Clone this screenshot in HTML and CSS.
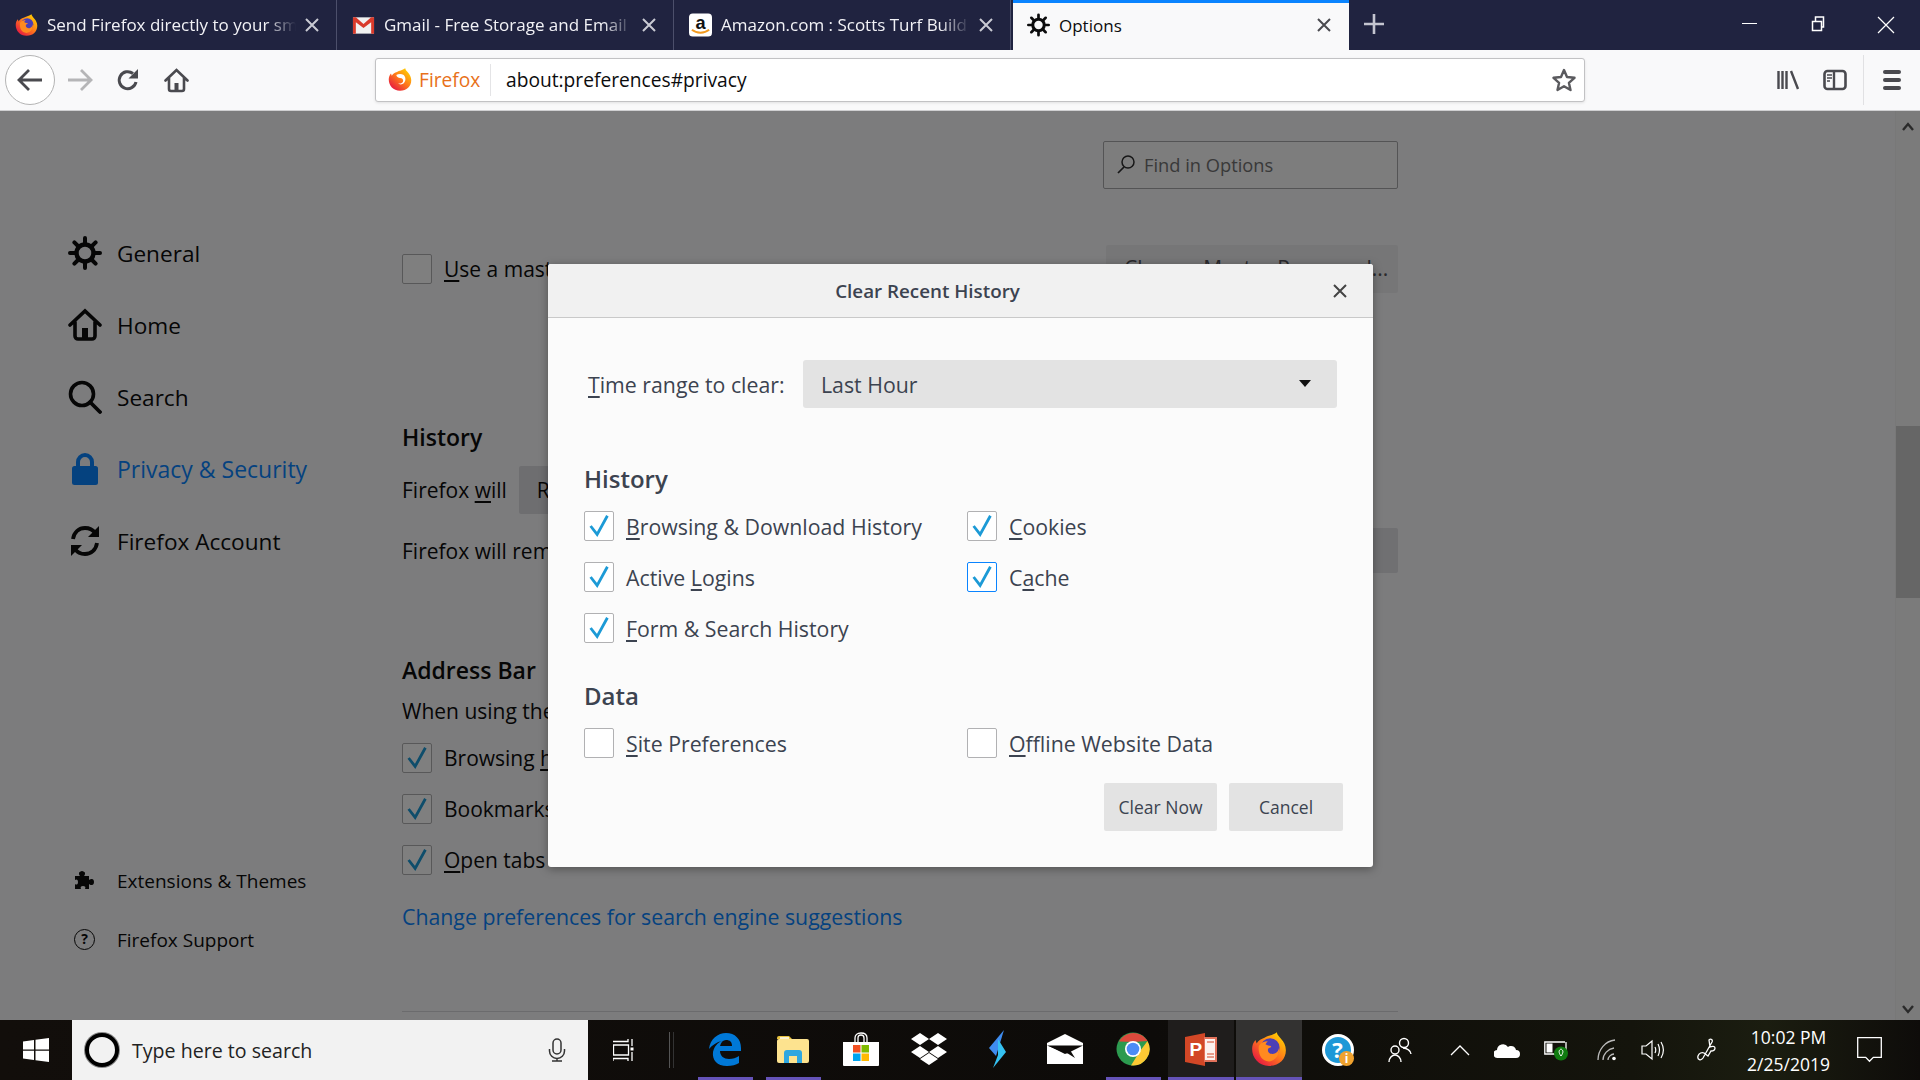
FILE: index.html
```html
<!DOCTYPE html>
<html lang="en">

<head>
    <meta charset="UTF-8">
    <title>Options</title>
    <link rel="stylesheet" href="styles.css">
</head>

<body>
    <svg class="defs" width="0" height="0">
        <defs>
            <linearGradient id="ffBody" x1="0.9" y1="0.1" x2="0.2" y2="0.9">
                <stop offset="0" stop-color="#ffd000" />
                <stop offset="0.5" stop-color="#ff7a1a" />
                <stop offset="1" stop-color="#e8203f" />
            </linearGradient>
            <symbol id="firefox" viewBox="0 0 32 32">
                <path d="M23 1c0 4 8 7 8 16 0 8-6 14-15 14C7 31 1 24 1 16c0-3 1-6 3-8l1 3c2-3 4-4 7-5 3-2 7-2 11-5z" fill="url(#ffBody)" />
                <circle cx="17" cy="15" r="8.5" fill="#4b3fb5" />
                <path d="M7 13c2-3 5-4 8-4-1 1-2 2-2 3 2 1 5 1 5 2-1 1-3 1-3 3 0 3 4 4 6 3 3-1 4-4 4-6 1 6-3 13-9 13-7 0-10-7-9-14z" fill="#ff8a1f" />
            </symbol>
            <symbol id="firefoxFlat" viewBox="0 0 32 32">
                <path d="M23 1c0 4 8 7 8 16 0 8-6 14-15 14C7 31 1 24 1 16c0-3 1-6 3-8l1 3c2-3 4-4 7-5 3-2 7-2 11-5z" fill="url(#ffBody)" />
                <path d="M11 10c3-2 7-2 10 0 3 3 3 8 0 11-2 2-6 2-8 0 3 1 6 0 7-2 1-3-1-5-4-5-2 0-4-1-5-4z" fill="#fff" />
            </symbol>
            <symbol id="gear" viewBox="0 0 34 34">
                <g fill="none" stroke="#0c0c0d">
                    <circle cx="17" cy="17" r="8.5" stroke-width="4.5" />
                    <path d="M17 2v5M17 27v5M2 17h5M27 17h5M6.4 6.4l3.6 3.6M24 24l3.6 3.6M27.6 6.4L24 10M10 24l-3.6 3.6" stroke-width="4" stroke-linecap="round" />
                </g>
            </symbol>
            <symbol id="tick" viewBox="0 0 30 30">
                <path d="M6 15l7 9L24 4" fill="none" stroke="#1c9ad6" stroke-width="3" />
            </symbol>
            <symbol id="cross" viewBox="0 0 16 16">
                <path d="M2 2l12 12M14 2L2 14" fill="none" stroke="currentColor" stroke-width="2" />
            </symbol>
        </defs>
    </svg>

    <div class="tabbar">
        <div class="tab">
            <svg class="tab-icon"><use href="#firefox" /></svg>
            <span class="tab-title fade">Send Firefox directly to your sm</span>
            <svg class="tab-close"><use href="#cross" /></svg>
        </div>
        <div class="tab">
            <svg class="tab-icon" viewBox="0 0 24 24">
                <rect x="1" y="4" width="22" height="17" fill="#f1f1f1" />
                <path d="M1 4h3l8 7 8-7h3v17h-3V9l-8 6-8-6v12H1z" fill="#d93a2b" />
            </svg>
            <span class="tab-title fade">Gmail - Free Storage and Email</span>
            <svg class="tab-close"><use href="#cross" /></svg>
        </div>
        <div class="tab">
            <svg class="tab-icon" viewBox="0 0 24 24">
                <rect width="24" height="24" rx="4" fill="#fff" />
                <text x="12" y="16" class="amazon-a">a</text>
                <path d="M3 17c5 4 13 4 18 0" fill="none" stroke="#f29a1f" stroke-width="2" />
            </svg>
            <span class="tab-title fade">Amazon.com : Scotts Turf Build</span>
            <svg class="tab-close"><use href="#cross" /></svg>
        </div>
        <div class="tab tab-active">
            <svg class="tab-icon"><use href="#gear" /></svg>
            <span class="tab-title">Options</span>
            <svg class="tab-close"><use href="#cross" /></svg>
        </div>
        <svg class="new-tab" viewBox="0 0 20 20">
            <path d="M10 0v20M0 10h20" stroke="#c4c5d0" stroke-width="2.6" />
        </svg>
        <div class="win-controls">
            <svg viewBox="0 0 68 50"><path d="M26 23.5h15" stroke="#fff" /></svg>
            <svg viewBox="0 0 68 50"><path d="M28.5 21.5h9v9h-9zM31.5 21v-4h8v10h-2" fill="none" stroke="#fff" stroke-width="1.5" /></svg>
            <svg viewBox="0 0 68 50"><path d="M26 17l16 16M42 17L26 33" fill="none" stroke="#fff" stroke-width="1.2" /></svg>
        </div>
    </div>

    <div class="toolbar">
        <div class="back-btn">
            <svg width="26" height="24" viewBox="0 0 26 24">
                <path d="M25 12H3M12 2L2 12l10 10" fill="none" stroke="#4a4a4f" stroke-width="2.8" />
            </svg>
        </div>
        <div class="tool-btn">
            <svg width="26" height="24" viewBox="0 0 26 24">
                <path d="M1 12h22M14 2l10 10-10 10" fill="none" stroke="#b5b5b7" stroke-width="2.8" />
            </svg>
        </div>
        <div class="tool-btn">
            <svg width="24" height="24" viewBox="0 0 24 24">
                <path d="M20 14a8.5 8.5 0 1 1-3-8.5" fill="none" stroke="#4a4a4f" stroke-width="3" />
                <path d="M22 1v9.5h-9.5z" fill="#4a4a4f" />
            </svg>
        </div>
        <div class="tool-btn">
            <svg width="25" height="25" viewBox="0 0 25 25">
                <path d="M1.5 12.5l11-10.5 11 10.5M5 10v11a2 2 0 0 0 2 2h11a2 2 0 0 0 2-2V10" fill="none" stroke="#4a4a4f" stroke-width="2.6" stroke-linecap="round" />
                <rect x="10.5" y="15" width="4" height="8" fill="#4a4a4f" />
            </svg>
        </div>
        <div class="urlbar">
            <svg class="url-icon"><use href="#firefoxFlat" /></svg>
            <span class="url-brand">Firefox</span>
            <span class="url-text">about:preferences#privacy</span>
            <svg class="url-star" width="24" height="24" viewBox="0 0 24 24">
                <path d="M12 2l3 7 7.5.8-5.6 5 1.6 7.2L12 18.2 5.500 22l1.600-7.200-5.600-5L9 9z" fill="none" stroke="#5a5a5e" stroke-width="2.4" stroke-linejoin="round" />
            </svg>
        </div>
        <div class="tool-right">
            <div class="tool-btn-r">
                <svg width="24" height="24" viewBox="0 0 24 24">
                    <path d="M2.5 3v18M6.500 3v18M10.500 3v18M15 3l7 18" fill="none" stroke="#4a4a4f" stroke-width="2.4" />
                </svg>
            </div>
            <div class="tool-btn-r">
                <svg width="24" height="24" viewBox="0 0 24 24">
                    <rect x="1.5" y="3" width="21" height="18" rx="3" fill="none" stroke="#4a4a4f" stroke-width="2.6" />
                    <path d="M11 3v18" stroke="#4a4a4f" stroke-width="2.4" />
                    <path d="M4 7h5M4 10h5M4 13h3" stroke="#4a4a4f" stroke-width="1.5" />
                </svg>
            </div>
            <div class="tool-sep"></div>
            <div class="tool-btn-r">
                <div class="burger"><i></i><i></i><i></i></div>
            </div>
        </div>
    </div>

    <div class="content">
        <div class="prefs">
            <div class="sidebar">
                <div class="cat">
                    <svg class="cat-icon"><use href="#gear" /></svg>
                    <span>General</span>
                </div>
                <div class="cat">
                    <svg class="cat-icon" viewBox="0 0 34 34">
                        <path d="M2 17L17 3l15 14M7 14v14a3 3 0 0 0 3 3h14a3 3 0 0 0 3-3V14" fill="none" stroke="#0c0c0d" stroke-width="3.6" stroke-linecap="round" />
                        <path d="M14 31V20h6v11z" fill="#0c0c0d" />
                    </svg>
                    <span>Home</span>
                </div>
                <div class="cat">
                    <svg class="cat-icon" viewBox="0 0 34 34">
                        <circle cx="14" cy="14" r="11.5" fill="none" stroke="#0c0c0d" stroke-width="3.6" />
                        <path d="M22 22l10 10" stroke="#0c0c0d" stroke-width="3.8" stroke-linecap="round" />
                    </svg>
                    <span>Search</span>
                </div>
                <div class="cat cat-active">
                    <svg class="cat-icon" viewBox="0 0 34 34">
                        <path d="M10 15V10a7 7 0 0 1 14 0v5" fill="none" stroke="#0a84ff" stroke-width="4" />
                        <rect x="4" y="14" width="26" height="19" rx="2.5" fill="#0a84ff" />
                    </svg>
                    <span>Privacy &amp; Security</span>
                </div>
                <div class="cat">
                    <svg class="cat-icon" viewBox="0 0 34 34">
                        <path d="M5 15C6 8 11 4 17 4c4 0 8 2 10 5" fill="none" stroke="#0c0c0d" stroke-width="3.8" />
                        <path d="M31 2v11H20z" fill="#0c0c0d" />
                        <path d="M29 19c-1 7-6 11-12 11-4 0-8-2-10-5" fill="none" stroke="#0c0c0d" stroke-width="3.8" />
                        <path d="M3 32V21h11z" fill="#0c0c0d" />
                    </svg>
                    <span>Firefox Account</span>
                </div>
                <div class="side-footer">
                    <div class="foot-item">
                        <svg class="foot-icon" viewBox="0 0 22 22">
                            <path d="M1 6h5c-1-1-1-2-1-3 0-1 2-2 3-2s3 1 3 2c0 1 0 2-1 3h5v4c1-1 2-1 3-1s2 1 2 3-1 3-2 3-2 0-3-1v5h-4c1-2 0-3-2-3s-3 1-2 3H1v-5c1 1 3 1 3-2S2 9 1 10z" fill="#0c0c0d" />
                        </svg>
                        <span>Extensions &amp; Themes</span>
                    </div>
                    <div class="foot-item">
                        <span class="help-ring">?</span>
                        <span>Firefox Support</span>
                    </div>
                </div>
            </div>

            <div class="main">
                <div class="find-box">
                    <svg width="20" height="20" viewBox="0 0 20 20">
                        <circle cx="12" cy="8" r="6" fill="none" stroke="#2e2e2e" stroke-width="1.5" />
                        <path d="M8 13l-6 6" stroke="#2e2e2e" stroke-width="1.7" />
                    </svg>
                    <span>Find in Options</span>
                </div>

                <div class="pref-row master-row">
                    <span class="box"></span>
                    <span class="label clip"><u>U</u>se a master password</span>
                    <span class="pref-btn btn-disabled">Change Master Password...</span>
                </div>

                <h2 class="pref-head history-head">History</h2>
                <div class="pref-row will-row">
                    <span>Firefox <u>w</u>ill</span>
                    <span class="pref-select">Remember history</span>
                </div>
                <div class="pref-row remember-row">
                    <span class="clip-wide">Firefox will remember your browsing, download, form and search history.</span>
                    <span class="pref-btn btn-stub"></span>
                </div>

                <h2 class="pref-head address-head">Address Bar</h2>
                <p class="when clip-wide">When using the address bar, suggest</p>
                <div class="pref-check">
                    <span class="box"><svg><use href="#tick" /></svg></span>
                    <span class="label clip">Browsing <u>h</u>istory</span>
                </div>
                <div class="pref-check">
                    <span class="box"><svg><use href="#tick" /></svg></span>
                    <span class="label clip">Bookmarks</span>
                </div>
                <div class="pref-check">
                    <span class="box"><svg><use href="#tick" /></svg></span>
                    <span class="label clip"><u>O</u>pen tabs</span>
                </div>
                <a class="pref-link">Change preferences for search engine suggestions</a>
                <div class="pref-hr"></div>
            </div>

            <div class="scrollbar">
                <svg width="12" height="9" viewBox="0 0 12 9"><path d="M1 8l5-6 5 6" fill="none" stroke="#555" stroke-width="2.4" /></svg>
                <div class="thumb"></div>
                <svg width="12" height="9" viewBox="0 0 12 9"><path d="M1 1l5 6 5-6" fill="none" stroke="#555" stroke-width="2.4" /></svg>
            </div>
        </div>

        <div class="overlay"></div>

        <div class="dialog">
            <div class="dlg-head">
                <span>Clear Recent History</span>
                <svg class="dlg-close"><use href="#cross" /></svg>
            </div>
            <div class="dlg-body">
                <div class="time-row">
                    <span class="time-label"><u>T</u>ime range to clear:</span>
                    <div class="dlg-select">
                        <span>Last Hour</span>
                        <i class="caret"></i>
                    </div>
                </div>

                <h3 class="dlg-section history-title">History</h3>
                <div class="check-grid">
                    <div class="check">
                        <span class="dbox"><svg><use href="#tick" /></svg></span>
                        <span><u>B</u>rowsing &amp; Download History</span>
                    </div>
                    <div class="check">
                        <span class="dbox"><svg><use href="#tick" /></svg></span>
                        <span><u>C</u>ookies</span>
                    </div>
                    <div class="check">
                        <span class="dbox"><svg><use href="#tick" /></svg></span>
                        <span>Active <u>L</u>ogins</span>
                    </div>
                    <div class="check">
                        <span class="dbox dbox-focus"><svg><use href="#tick" /></svg></span>
                        <span>C<u>a</u>che</span>
                    </div>
                    <div class="check">
                        <span class="dbox"><svg><use href="#tick" /></svg></span>
                        <span><u>F</u>orm &amp; Search History</span>
                    </div>
                </div>

                <h3 class="dlg-section data-title">Data</h3>
                <div class="check-grid">
                    <div class="check">
                        <span class="dbox"></span>
                        <span><u>S</u>ite Preferences</span>
                    </div>
                    <div class="check">
                        <span class="dbox"></span>
                        <span><u>O</u>ffline Website Data</span>
                    </div>
                </div>

                <div class="dlg-buttons">
                    <span class="dlg-btn">Clear Now</span>
                    <span class="dlg-btn">Cancel</span>
                </div>
            </div>
        </div>
    </div>

    <div class="taskbar">
        <div class="start">
            <svg width="26" height="24" viewBox="0 0 26 24">
                <path d="M0 3.5l11-1.5v9.4H0zM12.5 1.8L26 0v11.4H12.5zM0 12.8h11v9.3L0 20.6zM12.5 12.8H26V24l-13.5-1.8z" fill="#fff" />
            </svg>
        </div>
        <div class="search">
            <span class="cortana"></span>
            <span class="search-text">Type here to search</span>
            <svg class="mic" width="18" height="24" viewBox="0 0 18 24">
                <rect x="5" y="1" width="8" height="15" rx="4" fill="none" stroke="#333" stroke-width="1.5" />
                <path d="M1.5 11v2a7.5 7.5 0 0 0 15 0v-2M9 20.5V23M4 23h10" fill="none" stroke="#333" stroke-width="1.5" />
            </svg>
        </div>

        <div class="task-view">
            <svg width="26" height="24" viewBox="0 0 26 24">
                <path d="M0 3.5h15V1M0 23v-2.5h15V23M.5 7h15v10H.5zM19 1v7M19 14v9" fill="none" stroke="#fff" stroke-width="1.3" />
                <rect x="17.5" y="9.5" width="3" height="3" fill="#fff" />
            </svg>
        </div>
        <div class="tb-sep"></div>

        <div class="tb-slot tb-open">
            <svg width="32" height="34" viewBox="0 0 32 34">
                <path fill-rule="evenodd" d="M0 17C1 7 9 1 17 1c9 0 15 6 15 15v3H11c0 5 4 8 9 8 4 0 7-1 10-3v7c-3 2-7 3-12 3C8 34 3 28 4 20 5 15 8 11 13 9 8 10 3 13 0 17zM11 14h12c0-4-2-6-6-6-3 0-5 2-6 6z" fill="#0078d7" />
            </svg>
        </div>
        <div class="tb-slot tb-open">
            <svg width="32" height="28" viewBox="0 0 32 28">
                <path d="M0 3a2 2 0 0 1 2-2h10l3 3H0z" fill="#e8c33e" />
                <rect y="4" width="32" height="24" rx="2" fill="#fde38f" />
                <path d="M3 3h9" stroke="#fff" stroke-width="1.5" />
                <path d="M7 28V18a3 3 0 0 1 3-3h12a3 3 0 0 1 3 3v10h-5v-7h-8v7z" fill="#2ea7e0" />
            </svg>
        </div>
        <div class="tb-slot">
            <svg width="36" height="34" viewBox="0 0 36 34">
                <path d="M12 10V6c0-3 2-5 6-5s6 2 6 5v4M15 10V6c0-2 1-3 3-3s3 1 3 3v4" fill="none" stroke="#fff" stroke-width="1.3" />
                <path d="M0 10h36v23a1 1 0 0 1-1 1H1a1 1 0 0 1-1-1z" fill="#fff" />
                <rect x="10" y="13" width="7.5" height="7.5" fill="#f25022" />
                <rect x="18.5" y="13" width="7.5" height="7.5" fill="#7fba00" />
                <rect x="10" y="21.5" width="7.5" height="7.5" fill="#00a4ef" />
                <rect x="18.5" y="21.5" width="7.5" height="7.5" fill="#ffb900" />
            </svg>
        </div>
        <div class="tb-slot">
            <svg width="36" height="32" viewBox="0 0 36 32">
                <path d="M9 0l9 6-9 6-9-6zM27 0l9 6-9 6-9-6zM9 13l9 6-9 6-9-6zM27 13l9 6-9 6-9-6zM18 20l9 6-9 6-9-6z" fill="#fff" />
            </svg>
        </div>
        <div class="tb-slot">
            <svg width="18" height="38" viewBox="0 0 18 38">
                <path d="M16 0L1 18l7 8z" fill="#3f8cf0" />
                <path d="M10 9l8 13-13 16 5-13z" fill="#35c1f1" />
            </svg>
        </div>
        <div class="tb-slot">
            <svg width="36" height="30" viewBox="0 0 36 30">
                <path d="M18 0l18 9v3H0V9z" fill="#fff" />
                <path d="M0 11l18 9-4 2-14-6zM36 11v19H0V14l14 8 6-3 8 5-5-8z" fill="#fff" />
                <path d="M0 11.5h36l-16 8-3-1z" fill="#0d0a08" />
            </svg>
        </div>
        <div class="tb-slot tb-open">
            <svg width="34" height="34" viewBox="0 0 34 34">
                <circle cx="17" cy="17" r="16.5" fill="#2c9a4f" />
                <path d="M3 9.5A16.5 16.5 0 0 1 31.5 9L17 10z" fill="#dc4a3c" />
                <path d="M31.5 9A16.5 16.5 0 0 1 15 33.4L24 19z" fill="#fcc934" />
                <circle cx="17" cy="17" r="8" fill="#fff" />
                <circle cx="17" cy="17" r="6.3" fill="#4c8bf5" />
            </svg>
        </div>
        <div class="tb-slot tb-open tb-running">
            <svg width="33" height="33" viewBox="0 0 33 33">
                <path d="M0 4l20-4v33L0 29z" fill="#d24726" />
                <rect x="19" y="4" width="13" height="25" fill="#e2725b" />
                <rect x="20" y="6" width="10" height="21" fill="#fdf2ef" />
                <path d="M22 9h7M22 21h7M22 24h7" stroke="#d24726" />
                <text x="4.5" y="23" class="ppt-p">P</text>
            </svg>
        </div>
        <div class="tb-slot tb-open tb-current">
            <svg width="36" height="36"><use href="#firefox" /></svg>
        </div>

        <div class="tray">
            <div class="tray-item tray-help">
                <span class="help-badge">?</span>
                <span class="info-badge">i</span>
            </div>
            <div class="tray-item tray-people">
                <svg width="24" height="26" viewBox="0 0 24 26">
                    <circle cx="16" cy="6" r="4.5" fill="none" stroke="#fff" stroke-width="1.4" />
                    <circle cx="7" cy="13" r="4" fill="none" stroke="#fff" stroke-width="1.4" />
                    <path d="M1 25c0-4 3-7 6-7s6 3 6 7M15 11c4 0 8 3 8 6" fill="none" stroke="#fff" stroke-width="1.4" />
                </svg>
            </div>
            <div class="tray-item tray-chevron">
                <svg width="20" height="12" viewBox="0 0 20 12"><path d="M1 11l9-9 9 9" fill="none" stroke="#fff" stroke-width="1.3" /></svg>
            </div>
            <div class="tray-item tray-cloud">
                <svg width="26" height="18" viewBox="0 0 26 18">
                    <path d="M4 17a4 4 0 0 1-1-8 6 6 0 0 1 11-3 5 5 0 0 1 8 3 4 4 0 0 1 0 8z" fill="#fff" />
                </svg>
            </div>
            <div class="tray-item tray-battery">
                <svg width="26" height="22" viewBox="0 0 26 22">
                    <path d="M21 3H.8v12H15M22 3v8" fill="none" stroke="#fff" stroke-width="1.3" />
                    <rect x="2.5" y="4.5" width="6" height="9" fill="#fff" />
                    <circle cx="17" cy="14.5" r="7" fill="#107c10" />
                    <path d="M17 10c2 1 3 3 0 7-3-4-2-6 0-7z" fill="none" stroke="#fff" />
                </svg>
            </div>
            <div class="tray-item tray-wifi">
                <svg width="20" height="22" viewBox="0 0 20 22">
                    <path d="M1 21C1 11 8 2 18 1M6 21c0-6 5-11 11-12M11 21c0-3 3-6 6-6" fill="none" stroke="#bbb" stroke-width="1.3" />
                    <circle cx="17" cy="19.5" r="1.8" fill="#fff" />
                </svg>
            </div>
            <div class="tray-item tray-volume">
                <svg width="24" height="22" viewBox="0 0 24 22">
                    <path d="M1 7v8h4l6 5V2L5 7z" fill="none" stroke="#fff" stroke-width="1.2" />
                    <path d="M14 8c1 2 1 4 0 6M17 5c2 4 2 8 0 12M20 3c3 5 3 11 0 16" fill="none" stroke="#fff" stroke-width="1.2" />
                </svg>
            </div>
            <div class="tray-item tray-pen">
                <svg width="22" height="24" viewBox="0 0 22 24">
                    <path d="M13 2c2-2 4 0 3 2L7 20c-2 3-6 2-5-2 1-3 4-4 6-3l4 3 3-5c2 0 4-1 4-3s-3-2-5-1z" fill="none" stroke="#fff" stroke-width="1.3" />
                </svg>
            </div>
            <div class="clock">
                <span>10:02 PM</span>
                <span>2/25/2019</span>
            </div>
            <div class="tray-item tray-note">
                <svg width="25" height="26" viewBox="0 0 25 26">
                    <path d="M.7.7h23.6v19.6h-8l-3.800 4-3.800-4H.7z" fill="none" stroke="#fff" stroke-width="1.3" />
                </svg>
            </div>
        </div>
    </div>
</body>

</html>
```

FILE: styles.css
```css
* {
    padding: 0;
    margin: 0;
    box-sizing: border-box;
}

body {
    width: 1920px;
    height: 1080px;
    overflow: hidden;
    display: flex;
    flex-direction: column;
    font-family: "Open Sans", "Liberation Sans", sans-serif;
    color: #0c0c0d;
    background: #f9f9fa;
}

u {
    text-underline-offset: 3px;
}

.defs {
    position: absolute;
}

/* tabs */
.tabbar {
    height: 50px;
    flex: none;
    display: flex;
    background: #202340;
    color: #f2f2f6;
    font-size: 17px;
}

.tab {
    width: 337px;
    display: flex;
    align-items: center;
    padding-left: 15px;
    border-right: 1px solid #4c4f6b;
}

.tab-icon {
    width: 23px;
    height: 24px;
    flex: none;
}

.tab-title {
    width: 249px;
    margin: 0 0 2px 9px;
    white-space: nowrap;
    overflow: hidden;
}

.fade {
    -webkit-mask-image: linear-gradient(to right, #000 88%, transparent 100%);
    mask-image: linear-gradient(to right, #000 88%, transparent 100%);
}

.tab-close {
    width: 16px;
    height: 16px;
    margin-left: 8px;
    flex: none;
    color: #c9cad3;
}

.tab-active {
    width: 336px;
    background: #f9f9fa;
    color: #0c0c0d;
    border-top: 3px solid #0a84ff;
    border-right: 0;
    padding-bottom: 3px;
    margin-left: 2px;
    padding-left: 14px;
}

.tab-active .tab-title {
    width: 249px;
    margin-bottom: 0;
}

.tab-active .tab-close {
    color: #4a4a4f;
}

.amazon-a {
    font-family: "Liberation Sans", sans-serif;
    font-weight: bold;
    font-size: 19px;
    text-anchor: middle;
    fill: #111;
}

.new-tab {
    width: 20px;
    height: 20px;
    margin: 14px 0 0 15px;
}

.win-controls {
    margin-left: auto;
    display: flex;
}

.win-controls svg {
    width: 68px;
    height: 50px;
}

/* toolbar */
.toolbar {
    height: 61px;
    flex: none;
    display: flex;
    align-items: center;
    padding-left: 5px;
    background: #f9f9fa;
    border-bottom: 1px solid #cfcfd1;
}

.back-btn {
    width: 50px;
    height: 50px;
    margin-right: 1px;
    border: 1px solid #b4b4b4;
    border-radius: 50%;
    background: #fff;
    display: flex;
    align-items: center;
    justify-content: center;
}

.tool-btn {
    width: 48px;
    height: 48px;
    display: flex;
    align-items: center;
    justify-content: center;
}

.urlbar {
    width: 1210px;
    height: 44px;
    margin: 3px 0 4px 175px;
    background: #fff;
    border: 1px solid #c2c2c4;
    border-radius: 3px;
    box-shadow: 0 1px 3px rgba(0, 0, 0, 0.1);
    display: flex;
    align-items: center;
    font-size: 19.2px;
}

.url-icon {
    width: 24px;
    height: 25px;
    margin-left: 12px;
}

.url-brand {
    color: #e8711a;
    margin-left: 7px;
    width: 72px;
    height: 32px;
    line-height: 32px;
    border-right: 1px solid #e4e4e6;
}

.url-text {
    margin-left: 15px;
    color: #0c0c0d;
}

.url-star {
    margin-left: auto;
    margin-right: 8px;
}

.tool-right {
    margin-left: auto;
    display: flex;
    align-items: center;
    padding-right: 5px;
}

.tool-btn-r {
    width: 47px;
    height: 48px;
    display: flex;
    align-items: center;
    justify-content: center;
}

.tool-sep {
    width: 1px;
    height: 50px;
    margin: 0 4px 0 5px;
    background: #e1e1e3;
}

.burger {
    width: 18px;
}

.burger i {
    display: block;
    height: 3.5px;
    margin: 4.5px 0;
    background: #4a4a4f;
    border-radius: 2px;
}

/* page under the dialog */
.content {
    flex: 1;
    position: relative;
    overflow: hidden;
}

.prefs {
    height: 100%;
    display: flex;
    background: #f9f9fa;
}

.sidebar {
    width: 402px;
    flex: none;
    padding: 106px 0 0 68px;
    display: flex;
    flex-direction: column;
}

.cat {
    height: 72px;
    display: flex;
    align-items: center;
    font-size: 22.6px;
}

.cat-icon {
    width: 34px;
    height: 34px;
    margin-right: 15px;
    flex: none;
}

.cat-active {
    color: #0a84ff;
    font-size: 23px;
}

.side-footer {
    margin-top: 274px;
}

.foot-item {
    height: 59px;
    display: flex;
    align-items: center;
    font-size: 19px;
}

.foot-icon {
    width: 22px;
    height: 22px;
    margin: 0 21px 0 6px;
    flex: none;
}

.help-ring {
    width: 21px;
    height: 21px;
    margin: 0 22px 0 6px;
    flex: none;
    border: 1.5px solid #0c0c0d;
    border-radius: 50%;
    font-size: 14px;
    font-weight: bold;
    line-height: 18px;
    text-align: center;
}

.main {
    width: 996px;
    flex: none;
    padding-top: 30px;
    font-size: 21px;
}

.find-box {
    width: 295px;
    height: 48px;
    margin-left: auto;
    padding: 0 0 2px 12px;
    display: flex;
    align-items: center;
    gap: 8px;
    background: #fafafb;
    border: 1px solid #a8a8aa;
    border-radius: 2px;
    font-size: 18.3px;
    color: #737373;
}

.pref-row {
    display: flex;
    align-items: center;
}

.master-row {
    height: 48px;
    margin-top: 56px;
}

.box {
    width: 30px;
    height: 30px;
    flex: none;
    background: #fff;
    border: 1px solid #b1b1b3;
    border-radius: 2px;
}

.box svg,
.dbox svg {
    display: block;
    width: 100%;
    height: 100%;
}

.label {
    margin-left: 12px;
}

/* these run on behind the dialog, only the start shows */
.clip,
.clip-wide {
    white-space: nowrap;
    overflow: hidden;
}

.clip {
    width: 105px;
}

.clip-wide {
    width: 147px;
}

.pref-btn {
    margin-left: auto;
    width: 292px;
    height: 48px;
    padding-left: 18px;
    line-height: 46px;
    background: #ececee;
    border-radius: 2px;
}

.btn-disabled {
    color: #55555a;
}

.btn-stub {
    width: 40px;
    height: 45px;
    background: #e0e0e4;
}

.pref-head {
    font-size: 23px;
    font-weight: 600;
    line-height: 32px;
}

.history-head {
    margin-top: 128px;
}

.will-row {
    height: 48px;
    margin-top: 13px;
    gap: 12px;
}

.pref-select {
    width: 32px;
    height: 48px;
    padding-left: 18px;
    line-height: 48px;
    background: #dddde1;
    border-radius: 2px;
    white-space: nowrap;
    overflow: hidden;
}

.remember-row {
    height: 45px;
    margin-top: 14px;
}

.address-head {
    margin-top: 81px;
}

.when {
    margin-top: 9px;
    line-height: 32px;
}

.pref-check {
    display: flex;
    align-items: center;
    height: 30px;
    margin-top: 21px;
}

.when + .pref-check {
    margin-top: 16px;
}

.pref-link {
    display: block;
    margin-top: 26px;
    line-height: 32px;
    font-size: 21.3px;
    color: #0a84ff;
}

.pref-hr {
    margin-top: 78px;
    height: 1px;
    background: #d7d7db;
}

.scrollbar {
    width: 25px;
    margin-left: auto;
    display: flex;
    flex-direction: column;
    align-items: center;
    padding-top: 11px;
    background: #f7f7f7;
    border-left: 1px solid #f0f0f0;
}

.thumb {
    width: 24px;
    height: 172px;
    margin: 295px 0 auto;
    background: #cdcdcd;
}

.scrollbar svg:last-child {
    margin-bottom: 6px;
}

.overlay {
    position: absolute;
    top: 0;
    right: 0;
    bottom: 0;
    left: 0;
    background: rgba(0, 0, 0, 0.5);
}

/* clear history dialog */
.dialog {
    position: absolute;
    left: 548px;
    top: 153px;
    width: 825px;
    height: 603px;
    background: #fbfbfb;
    border-radius: 3px;
    box-shadow: 0 2px 10px rgba(0, 0, 0, 0.35);
    color: #3c4350;
    font-size: 21.3px;
}

.dlg-head {
    height: 54px;
    padding-right: 66px;
    position: relative;
    display: flex;
    align-items: center;
    justify-content: center;
    background: #f1f1f1;
    border-bottom: 1px solid #c9c9c9;
    border-radius: 3px 3px 0 0;
    font-size: 18.8px;
    font-weight: 600;
}

.dlg-close {
    position: absolute;
    right: 25px;
    top: 19px;
    width: 16px;
    height: 16px;
    color: #444;
}

.dlg-body {
    padding: 42px 30px 0 36px;
}

.time-row {
    display: flex;
    align-items: center;
}

.time-label {
    width: 219px;
    padding: 1px 0 0 4px;
}

.dlg-select {
    width: 534px;
    height: 48px;
    padding: 1px 26px 0 18px;
    display: flex;
    align-items: center;
    justify-content: space-between;
    background: #e3e3e3;
    border-radius: 3px;
}

.caret {
    margin-top: -2px;
    border-top: 7px solid #111;
    border-left: 6.5px solid transparent;
    border-right: 6.5px solid transparent;
}

.dlg-section {
    font-size: 24px;
    font-weight: 600;
    line-height: 30px;
}

.history-title {
    margin-top: 56px;
}

.data-title {
    margin-top: 38px;
}

.check-grid {
    display: grid;
    grid-template-columns: 383px 1fr;
    row-gap: 21px;
    margin-top: 17px;
}

.data-title + .check-grid {
    margin-top: 17px;
}

.check {
    height: 30px;
    display: flex;
    align-items: center;
    gap: 12px;
    white-space: nowrap;
}

.dbox {
    width: 30px;
    height: 30px;
    flex: none;
    background: #fff;
    border: 1px solid #b1b1b3;
    border-radius: 2px;
}

.dbox-focus {
    border-color: #0a84ff;
}

.dlg-buttons {
    display: flex;
    justify-content: flex-end;
    gap: 12px;
    margin-top: 25px;
}

.dlg-btn {
    width: 113px;
    height: 48px;
    line-height: 48px;
    text-align: center;
    background: #e3e3e3;
    border-radius: 2px;
    font-size: 17.5px;
}

.dlg-btn:last-child {
    width: 114px;
}

/* windows taskbar */
.taskbar {
    height: 60px;
    flex: none;
    display: flex;
    align-items: center;
    color: #fff;
    background: linear-gradient(to right, #120e0b 0%, #0d0b09 60%, #14140c 85%, #1b1d10 92%, #0e0c0a 100%);
}

.start {
    width: 72px;
    height: 60px;
    display: flex;
    align-items: center;
    justify-content: center;
}

.search {
    width: 516px;
    height: 60px;
    display: flex;
    align-items: center;
    padding-left: 13px;
    background: #f2f2f2;
    color: #222;
    font-size: 19.6px;
}

.cortana {
    width: 34px;
    height: 34px;
    border: 4px solid #000;
    border-radius: 50%;
    box-shadow: 0 0 0 1px #888;
    background: #f2f2f2;
}

.search-text {
    margin-left: 13px;
}

.mic {
    margin-left: auto;
    margin-right: 22px;
}

.task-view {
    width: 64px;
    margin-left: 6px;
    display: flex;
    justify-content: center;
}

.tb-sep {
    width: 33px;
    height: 36px;
    background: linear-gradient(#555, #555) 11px 0 / 1px 100% no-repeat, linear-gradient(#333, #333) 15px 0 / 1px 100% no-repeat;
}

.tb-slot {
    width: 66px;
    height: 60px;
    margin: 0 1px;
    position: relative;
    display: flex;
    align-items: center;
    justify-content: center;
    padding-bottom: 2px;
}

.tb-open::after {
    content: "";
    position: absolute;
    left: 6px;
    right: 5px;
    bottom: 0;
    height: 3px;
    background: #6553b8;
}

.tb-running {
    background: #1f1d1c;
}

.tb-current {
    background: #333231;
}

.tb-running::after,
.tb-current::after {
    left: 0;
    right: 0;
}

.ppt-p {
    font-family: "Liberation Sans", sans-serif;
    font-weight: bold;
    font-size: 19px;
    fill: #fff;
}

.tray {
    flex: 1;
    height: 60px;
    display: flex;
    align-items: center;
}

.tray-item {
    height: 60px;
    flex: none;
    position: relative;
    display: flex;
    align-items: center;
    justify-content: center;
}

.tray-help {
    width: 69px;
}

.tray-people {
    width: 56px;
}

.tray-chevron {
    width: 64px;
}

.tray-cloud {
    width: 30px;
}

.tray-battery {
    width: 69px;
}

.tray-wifi {
    width: 32px;
}

.tray-volume {
    width: 60px;
}

.tray-pen {
    width: 48px;
}

.tray-note {
    width: 46px;
}

.help-badge {
    width: 32px;
    height: 32px;
    border: 3px solid #fff;
    border-radius: 50%;
    background: #1e98d7;
    font-size: 22px;
    font-weight: bold;
    line-height: 25px;
    text-align: center;
}

.info-badge {
    position: absolute;
    left: 36px;
    top: 31px;
    width: 15px;
    height: 15px;
    border-radius: 50%;
    background: #f0a22e;
    font-size: 12px;
    font-weight: bold;
    line-height: 15px;
    text-align: center;
}

.clock {
    width: 115px;
    display: flex;
    flex-direction: column;
    align-items: center;
    gap: 5px;
    font-size: 17.5px;
    line-height: 22px;
}
```
